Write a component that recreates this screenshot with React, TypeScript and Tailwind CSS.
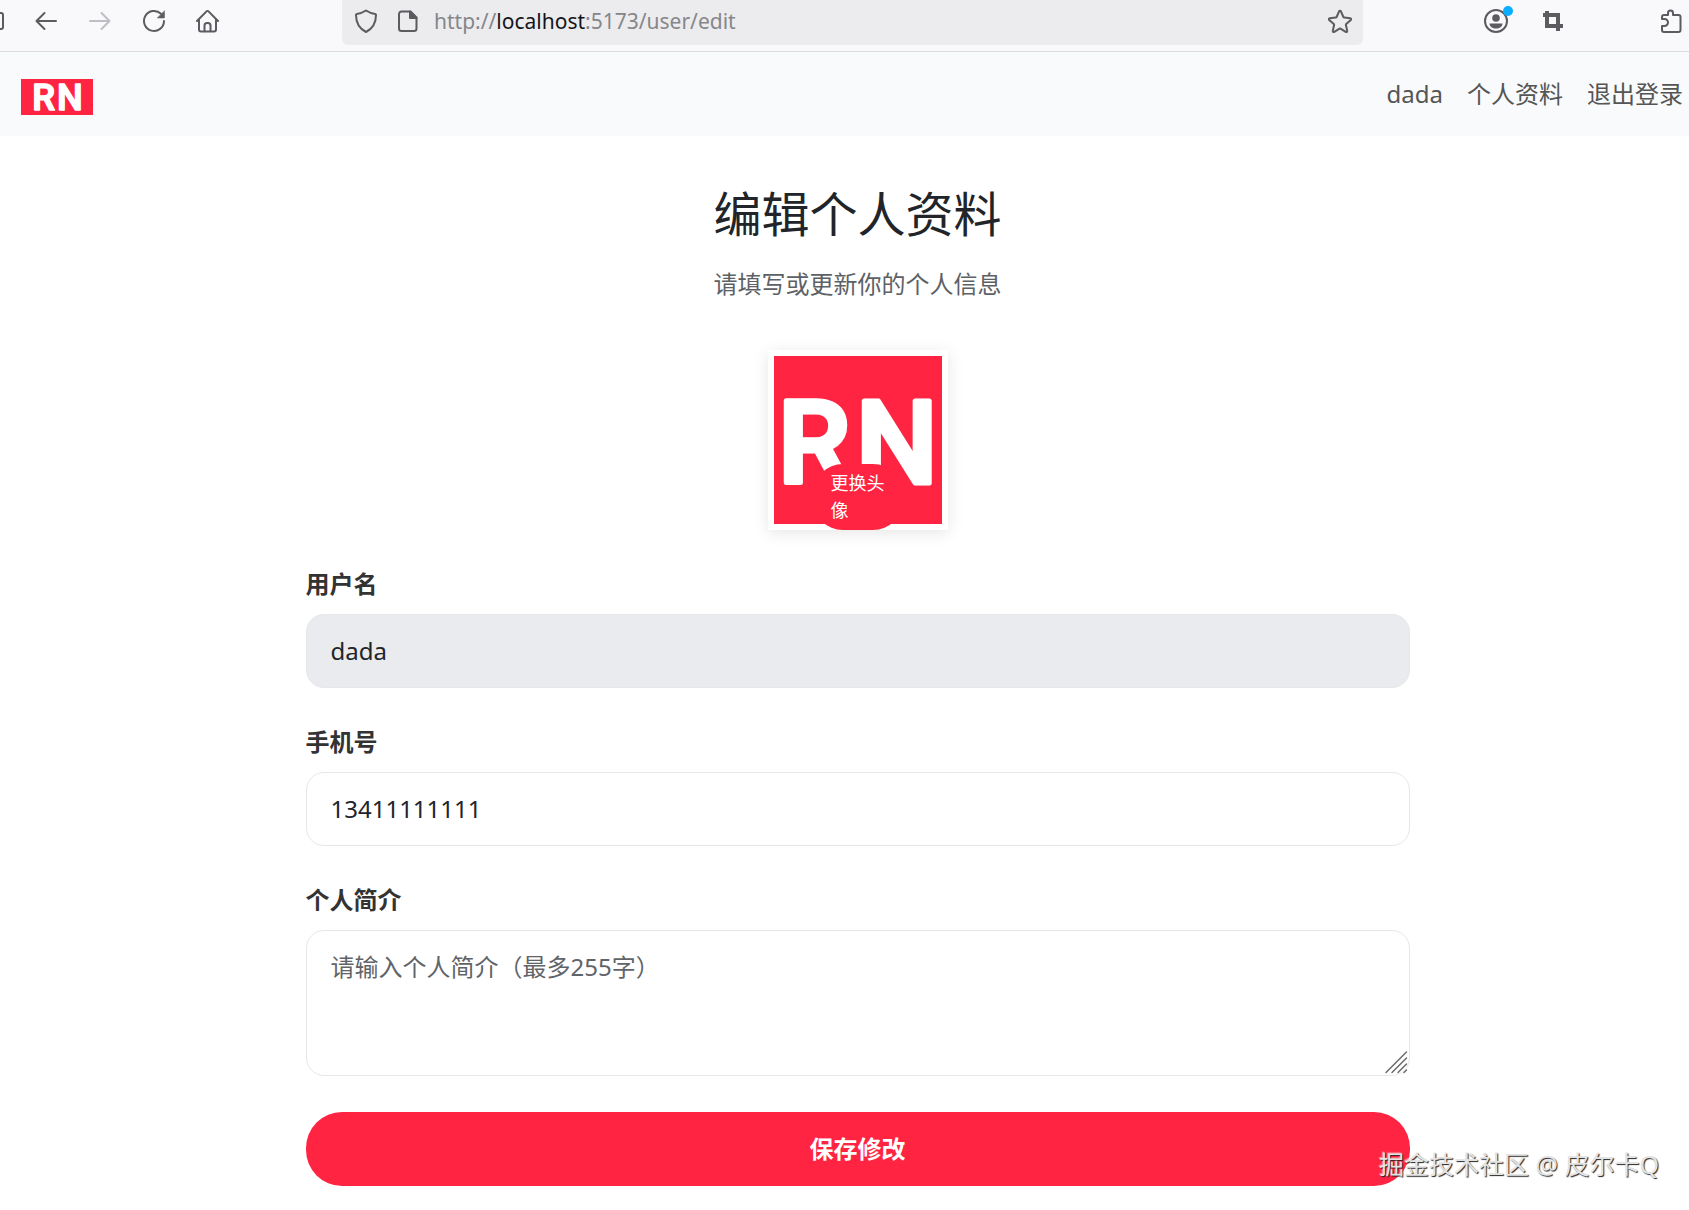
import type { ReactNode } from "react";

function Icon({ children, className = "" }: { children: ReactNode; className?: string }) {
  return (
    <svg
      viewBox="0 0 24 24"
      className={`size-6 shrink-0 ${className}`}
      fill="none"
      stroke="currentColor"
      strokeWidth="2"
      strokeLinecap="round"
      strokeLinejoin="round"
      aria-hidden="true"
    >
      {children}
    </svg>
  );
}

function ToolButton({ label, children, className = "" }: { label: string; children: ReactNode; className?: string }) {
  return (
    <button type="button" aria-label={label} className={`relative shrink-0 ${className}`}>
      {children}
    </button>
  );
}

function BrowserBar() {
  return (
    <div className="flex h-[52px] items-start border-b border-[#dcdce0] bg-[#f9f9fb] pr-1.5 text-[#5b5b60]">
      <div className="flex h-[42px] items-center gap-[30px]">
        <ToolButton label="侧边栏">
          <svg viewBox="0 0 4 24" className="h-6 w-1" fill="none" stroke="currentColor" strokeWidth="2" aria-hidden="true">
            <path d="M-2 4H1a2 2 0 0 1 2 2v12a2 2 0 0 1-2 2h-3" />
          </svg>
        </ToolButton>
        <ToolButton label="后退">
          <Icon>
            <path d="M22 12H2.500M10.500 4 2.500 12l8 8" />
          </Icon>
        </ToolButton>
        <ToolButton label="前进" className="text-[#bfbfc3]">
          <Icon>
            <path d="M2 12h19.500M13.500 4l8 8-8 8" />
          </Icon>
        </ToolButton>
        <ToolButton label="刷新">
          <Icon>
            <path d="M19 4.800A10 10 0 1 0 22 12" />
            <path d="M22.500 2v6.500a.5.5 0 0 1-.5.500h-6.500z" fill="currentColor" strokeWidth="0.5" />
          </Icon>
        </ToolButton>
        <ToolButton label="主页">
          <Icon>
            <path d="M1 12 10.500 2.400a1.400 1.400 0 0 1 2 0L22 12M3 10.500V20.500a2 2 0 0 0 2 2h13a2 2 0 0 0 2-2V10.500M8.500 22.500V16.500a2.500 2.500 0 0 1 2.500-2.500h1A2.500 2.500 0 0 1 14.500 16.500v6" />
          </Icon>
        </ToolButton>
      </div>

      <div className="ml-[122px] flex h-[45px] min-w-0 flex-1 items-start rounded-b-md bg-[#ececee] pr-[11px] pl-3">
        <div className="flex h-[42px] min-w-0 flex-1 items-center">
          <Icon>
            <path d="M12 1.500c3 2 6 3 9.200 3.400a1 1 0 0 1 .8 1C22 13 18.500 19.500 12 23 5.500 19.500 2 13 2 5.900a1 1 0 0 1 .8-1C6 4.500 9 3.500 12 1.500z" />
          </Icon>
          <Icon className="ml-[18px]">
            <path d="M14.500 2.500H5.500a2.500 2.500 0 0 0-2.500 2.500v14.500a2.500 2.500 0 0 0 2.500 2.500h12.500a2.500 2.500 0 0 0 2.500-2.500V8.500z" />
            <path d="M14 2.500V9h6.500z" fill="currentColor" />
          </Icon>
          <div role="textbox" aria-label="地址栏" className="ml-[14px] flex-1 truncate text-[21px] leading-8 text-[#86868a]">
            http://<span className="text-[#15141a]">localhost</span>:5173/user/edit
          </div>
          <ToolButton label="收藏">
            <Icon>
              <path d="M11.100 2.300a1 1 0 0 1 1.800 0l2.500 5.700a1 1 0 0 0 .8.600l6.100.6a1 1 0 0 1 .5 1.700l-4.600 4.100a1 1 0 0 0-.3 1l1.300 5.800a1 1 0 0 1-1.500 1.100L12.500 19.700a1 1 0 0 0-1 0l-5.200 3.200a1 1 0 0 1-1.500-1.100L6.100 16a1 1 0 0 0-.3-1L1.200 10.900a1 1 0 0 1 .5-1.700l6.100-.6a1 1 0 0 0 .8-.6z" />
            </Icon>
          </ToolButton>
        </div>
      </div>

      <div className="ml-[121px] flex h-[42px] items-center">
        <ToolButton label="账户">
          <Icon>
            <circle cx="12" cy="12" r="11" />
            <circle cx="12" cy="9" r="3.800" fill="currentColor" stroke="none" />
            <path d="M5.500 14.500h13c0 3-3 5-6.500 5s-6.500-2-6.500-5z" fill="currentColor" stroke="none" />
          </Icon>
          <span className="absolute -top-[3px] -right-[5px] size-[10px] rounded-full bg-[#0aadff]" />
        </ToolButton>
        <ToolButton label="截图" className="ml-[33px]">
          <Icon>
            <path d="M6 2v15h16M2 6h15v16" strokeWidth="4" strokeLinecap="butt" strokeLinejoin="miter" />
          </Icon>
        </ToolButton>
        <ToolButton label="扩展" className="ml-[94px]">
          <Icon>
            <path d="M3 10V8a2 2 0 0 1 2-2h4V4a2.500 2.500 0 0 1 5 0v2h5.500a2 2 0 0 1 2 2v13a2 2 0 0 1-2 2H5a2 2 0 0 1-2-2v-4h2.500a3 3 0 0 0 0-7z" />
          </Icon>
        </ToolButton>
      </div>
    </div>
  );
}

function Logo({ viewBox, className }: { viewBox: string; className: string }) {
  return (
    <svg viewBox={viewBox} className={`bg-[#ff2442] ${className}`} role="img" aria-label="RN">
      <text
        y="127"
        fill="#fff"
        stroke="#fff"
        strokeWidth="5"
        strokeLinejoin="round"
        fontFamily="Roboto, sans-serif"
        fontWeight="500"
        fontSize="115"
      >
        <tspan x="4">R</tspan>
        <tspan x="82">N</tspan>
      </text>
    </svg>
  );
}

const control =
  "block w-full rounded-[18px] border border-[#e6e7e9] px-6 text-2xl leading-9 text-[#212529] placeholder:text-[#5f6469] outline-none";

function Field({ id, label, children }: { id: string; label: string; children: ReactNode }) {
  return (
    <div className="mb-9">
      <label htmlFor={id} className="mb-3 block font-bold text-[#333]">
        {label}
      </label>
      {children}
    </div>
  );
}

export default function App() {
  return (
    <div className="relative min-h-screen overflow-hidden bg-white font-['Noto_Sans','Noto_Sans_CJK_SC',sans-serif] text-2xl leading-9 text-[#212529]">
      <BrowserBar />

      <header className="flex h-[84px] items-center justify-between bg-[#f8fafc] pr-1.5 pl-[21px]">
        <a href="#home" aria-label="RN">
          <Logo viewBox="-32 29 228 114" className="mt-[6px] h-9 w-[72px]" />
        </a>
        <nav className="flex gap-6 text-[#555]">
          <a href="#user">dada</a>
          <a href="#profile">个人资料</a>
          <a href="#logout">退出登录</a>
        </nav>
      </header>

      <main className="pt-12 pl-[26px]">
        <div className="mx-auto max-w-[1104px]">
          <div className="text-center">
            <h1 className="text-5xl leading-[60px] font-normal">编辑个人资料</h1>
            <p className="mt-[22px] text-[#5c6166]">请填写或更新你的个人信息</p>
          </div>

          <div className="relative mx-auto mt-12 mb-9 size-[180px] border-6 border-white shadow-[0_3px_15px_rgba(0,0,0,0.1)]">
            <Logo viewBox="0 0 168 168" className="size-[168px]" />
            <button
              type="button"
              className="absolute -bottom-1.5 left-[39px] w-[90px] rounded-[30px] bg-[#ff2442] px-[18px] py-1.5 text-left text-lg leading-[27px] text-white"
            >
              更换头像
            </button>
          </div>

          <form>
            <Field id="username" label="用户名">
              <input id="username" disabled defaultValue="dada" className={`${control} h-[74px] bg-[#e9ebee] pb-0.5`} />
            </Field>
            <Field id="phone" label="手机号">
              <input id="phone" type="tel" defaultValue="13411111111" className={`${control} h-[74px] pb-0.5`} />
            </Field>
            <Field id="bio" label="个人简介">
              <div className="relative">
                <textarea
                  id="bio"
                  placeholder="请输入个人简介（最多255字）"
                  className={`${control} h-[146px] resize-none py-[18px]`}
                />
                <svg
                  viewBox="0 0 24 24"
                  className="pointer-events-none absolute right-0.5 bottom-0.5 size-6"
                  stroke="#6b6b6b"
                  strokeWidth="1.5"
                  strokeLinecap="round"
                  aria-hidden="true"
                >
                  <path d="M2 22.500 22.500 2M8 22.500 22.500 8M14 22.500l8.500-8.500M20 22.500l2.500-2.500" />
                </svg>
              </div>
            </Field>
            <button type="button" className="block h-[74px] w-full rounded-[36px] bg-[#ff2442] font-bold text-white">
              保存修改
            </button>
          </form>
        </div>
      </main>

      <div className="pointer-events-none absolute right-[30px] bottom-7 text-[25px] text-[#e4e4e4] [text-shadow:1px_1px_1px_#222,-1px_-1px_1px_#ffffff80]">
        掘金技术社区 @ 皮尔卡Q
      </div>
    </div>
  );
}
